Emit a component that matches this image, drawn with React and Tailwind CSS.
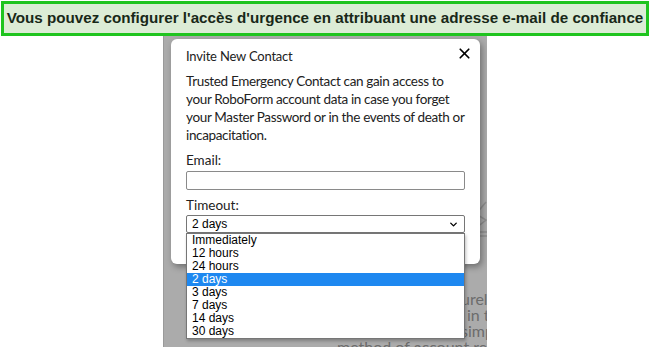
import { X, ChevronDown } from "lucide-react";

const options = [
  "Immediately",
  "12 hours",
  "24 hours",
  "2 days",
  "3 days",
  "7 days",
  "14 days",
  "30 days",
];

const description = [
  "Trusted Emergency Contact can gain access to",
  "your RoboForm account data in case you forget",
  "your Master Password or in the events of death or",
  "incapacitation.",
];

function Banner() {
  return (
    <div className="mx-[1px] mt-[1px] flex h-[35px] items-center justify-center border-[3px] border-[#1fc41f] bg-[#dcecd6]">
      <p className="font-['Liberation_Sans',Arial,sans-serif] text-[15.2px] font-bold text-[#182818]">
        Vous pouvez configurer l'accès d'urgence en attribuant une adresse e-mail de confiance
      </p>
    </div>
  );
}

function TimeoutSelect() {
  return (
    <div className="relative">
      <div className="flex h-[18px] items-center justify-between rounded-[2px] border border-[#767676] bg-white pl-[5px] pr-[5px] font-['Liberation_Sans',Arial,sans-serif] text-[12px] text-black">
        <span>2 days</span>
        <ChevronDown size={11} strokeWidth={3} className="text-black" />
      </div>
      <ul className="absolute left-0 right-0 top-[18px] z-10 border border-[#767676] bg-white font-['Liberation_Sans',Arial,sans-serif] text-[12px] leading-[13px] text-black shadow-[1px_2px_3px_rgba(0,0,0,0.25)]">
        {options.map((o) => (
          <li
            key={o}
            className={
              o === "2 days"
                ? "h-[13px] bg-[#1e88f0] pl-[5px] text-white"
                : "h-[13px] pl-[5px]"
            }
          >
            {o}
          </li>
        ))}
      </ul>
    </div>
  );
}

function Modal() {
  return (
    <div className="relative z-10 ml-[7px] mt-[3px] h-[225px] w-[309px] rounded-[6px] bg-white px-[15px] pt-[8px] shadow-[2px_3px_6px_rgba(0,0,0,0.35)] font-['Lato','Noto_Sans',sans-serif] text-[#222]">
      <div className="flex items-start justify-between">
        <h3 className="text-[13px] leading-[18px] tracking-[-0.2px]">Invite New Contact</h3>
        <X size={17} strokeWidth={2.4} className="mr-[-8px] mt-[-2px] text-black" />
      </div>
      <p className="mt-[7px] whitespace-nowrap text-[13.5px] leading-[18px] tracking-[-0.35px]">
        {description.map((line) => (
          <span key={line} className="block">
            {line}
          </span>
        ))}
      </p>
      <label className="mt-[7px] block text-[13.5px] leading-[18px]">Email:</label>
      <div className="mt-[2px] h-[19px] rounded-[2px] border border-[#8a8a8a] bg-white" />
      <label className="mt-[6px] block text-[13.5px] leading-[18px]">Timeout:</label>
      <div className="mt-[1px]">
        <TimeoutSelect />
      </div>
    </div>
  );
}

export default function App() {
  return (
    <div className="relative h-[347px] w-[650px] overflow-hidden bg-white">
      <Banner />
      <div className="relative ml-[163px] h-[312px] w-[324px] overflow-hidden border-l border-[#9a9a9a] bg-[#ababab]">
        {/* page behind the overlay */}
        <svg
          className="absolute left-[308px] top-[162px]"
          width="30"
          height="40"
          viewBox="0 0 30 40"
          fill="none"
          stroke="#8f8f8f"
          strokeWidth="1.5"
        >
          <path d="M14 4 L4 16 L14 22 L4 30" />
          <path d="M2 34 H28" />
          <path d="M2 38 H28" />
        </svg>
        <div className="absolute left-[297px] top-[255px] whitespace-nowrap font-['Lato','Noto_Sans',sans-serif] text-[16px] leading-[16px] text-[#6c6c6c]">
          <p>urely</p>
          <p className="pl-[6px]">in th</p>
          <p>simp</p>
        </div>
        <p className="absolute left-[173px] top-[303px] whitespace-nowrap font-['Lato','Noto_Sans',sans-serif] text-[16px] leading-[16px] text-[#6c6c6c]">
          method of account recovery
        </p>
        <Modal />
      </div>
    </div>
  );
}
